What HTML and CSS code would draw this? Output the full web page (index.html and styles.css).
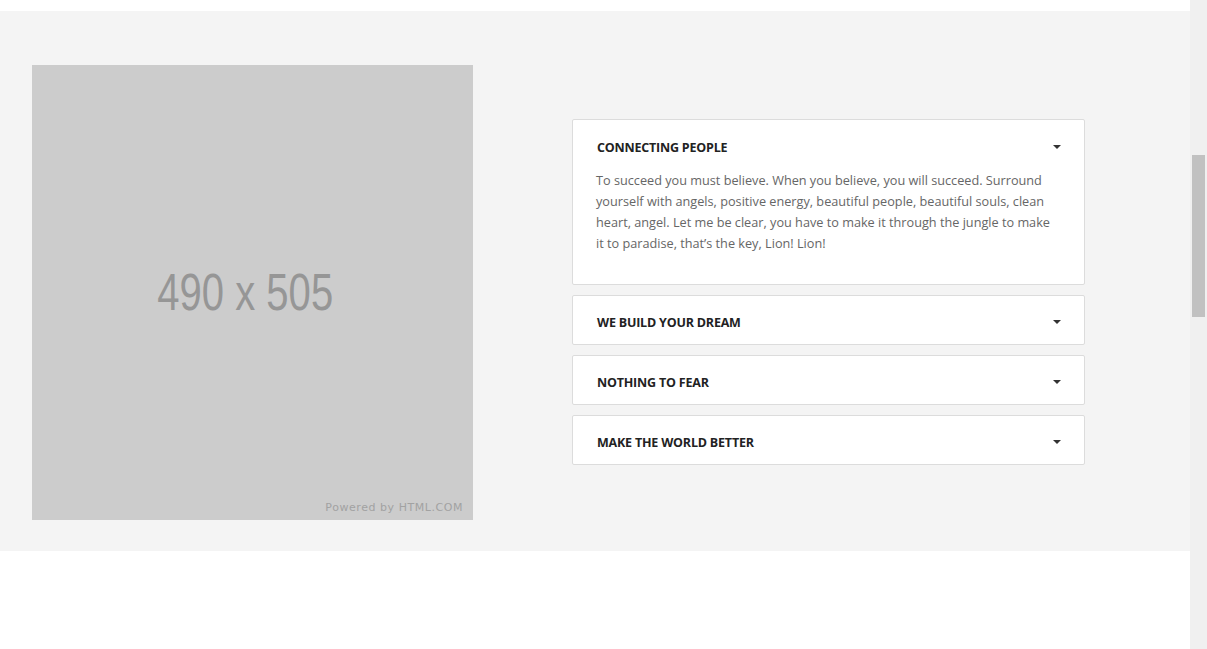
FILE: index.html
```html
<!DOCTYPE html>
<html>
<head>
<meta charset="utf-8">
<link rel="stylesheet" href="styles.css">
</head>
<body>
<div class="page">
  <main class="main">
    <div class="top-space"></div>
    <section class="feature">
      <div class="placeholder">
        <span class="ph-size">490 x 505</span>
        <span class="ph-credit">Powered by HTML.COM</span>
      </div>
      <div class="accordion">
        <div class="acc-item open">
          <div class="acc-head"><span class="acc-title">CONNECTING PEOPLE</span><span class="caret"></span></div>
          <div class="acc-body">To succeed you must believe. When you believe, you will succeed. Surround yourself with angels, positive energy, beautiful people, beautiful souls, clean heart, angel. Let me be clear, you have to make it through the jungle to make it to paradise, that’s the key, Lion! Lion!</div>
        </div>
        <div class="acc-item">
          <div class="acc-head"><span class="acc-title">WE BUILD YOUR DREAM</span><span class="caret"></span></div>
        </div>
        <div class="acc-item">
          <div class="acc-head"><span class="acc-title">NOTHING TO FEAR</span><span class="caret"></span></div>
        </div>
        <div class="acc-item">
          <div class="acc-head"><span class="acc-title">MAKE THE WORLD BETTER</span><span class="caret"></span></div>
        </div>
      </div>
    </section>
  </main>
  <div class="scrollbar"><div class="thumb"></div></div>
</div>
</body>
</html>
```

FILE: styles.css
```css
html, body {
  margin: 0;
  padding: 0;
  height: 100%;
  background: #fff;
}
.page {
  display: flex;
  height: 649px;
  overflow: hidden;
}
.main {
  width: 1190px;
  flex: none;
}
.top-space {
  height: 11px;
}
.feature {
  background: #f4f4f4;
  height: 540px;
  box-sizing: border-box;
  padding: 54px 0 31px 32px;
  display: grid;
  grid-template-columns: 441px 513px;
  column-gap: 99px;
  align-items: center;
}
.placeholder {
  width: 441px;
  height: 455px;
  background: #cccccc;
  display: flex;
  align-items: center;
  justify-content: center;
  position: relative;
}
.ph-size {
  font-family: "Liberation Sans", Arial, sans-serif;
  font-size: 52px;
  color: #969696;
  transform: scaleX(0.77);
  white-space: nowrap;
  margin: 0 14px 0 0;
  position: relative;
  top: -1px;
}
.ph-credit {
  position: absolute;
  right: 10px;
  bottom: 6px;
  font-family: "DejaVu Sans", sans-serif;
  font-size: 11px;
  color: #a2a2a2;
  letter-spacing: 0.55px;
}
.accordion {
  display: flex;
  flex-direction: column;
  gap: 10px;
  margin-bottom: 2px;
}
.acc-item {
  background: #fff;
  border: 1px solid #dcdcdc;
  border-radius: 2px;
}
.acc-head {
  height: 48px;
  box-sizing: border-box;
  padding: 5px 23px 0 24px;
  display: flex;
  align-items: center;
  justify-content: space-between;
}
.acc-title {
  font-family: "Open Sans", sans-serif;
  font-weight: 700;
  font-size: 12.5px;
  color: #222;
  letter-spacing: -0.2px;
}
.caret {
  width: 0;
  height: 0;
  border-left: 4px solid transparent;
  border-right: 4px solid transparent;
  border-top: 4px solid #333;
}
.open .acc-head {
  height: 50px;
}
.acc-body {
  padding: 0 24px 30px 23px;
  font-family: "Open Sans", sans-serif;
  font-size: 12.7px;
  line-height: 21px;
  color: #666;
}
.scrollbar {
  width: 17px;
  flex: none;
  background: #f0f0f0;
  padding-top: 155px;
  box-sizing: border-box;
}
.thumb {
  margin-left: 2px;
  width: 13px;
  height: 162px;
  background: #c1c1c1;
}
```
